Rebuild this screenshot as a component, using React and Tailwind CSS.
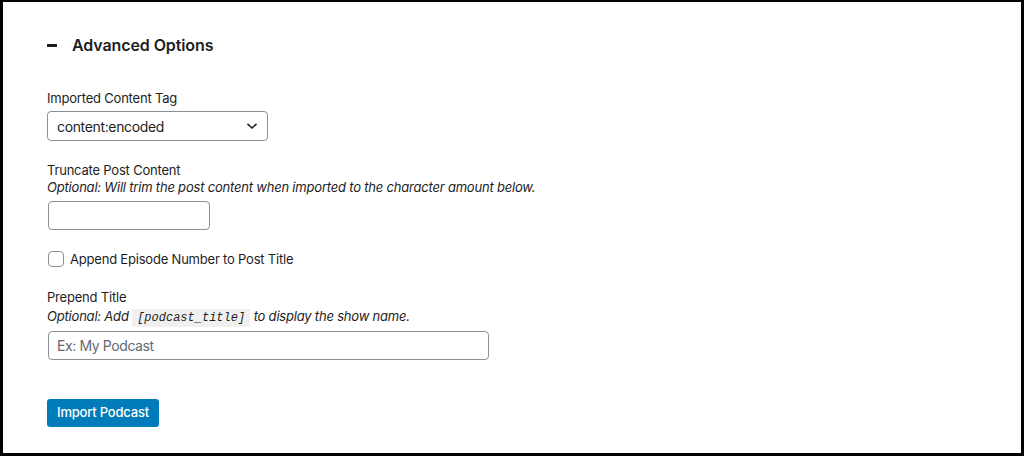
import React from "react";

export default function App() {
  const font = { fontFamily: "Inter, 'Noto Sans', sans-serif" };
  return (
    <div className="w-[1024px] h-[456px] bg-white border-black border-t-2 border-l-[3px] border-r-[3px] border-b-[3px] overflow-hidden text-[#1e1e1e] tracking-[-0.2px]" style={font}>
      <div className="pl-[44px] pt-[31px]">
        <div className="flex items-center h-6">
          <span className="w-[10px] h-[3px] bg-[#1e1e1e] mr-[15px]" />
          <h2 className="text-[16px] font-semibold leading-6 tracking-[-0.1px]">Advanced Options</h2>
        </div>

        <div className="mt-[32px] text-[13px] leading-[18px]">Imported Content Tag</div>
        <div className="mt-[4px] w-[221px] h-[30px] border border-[#8c8f94] rounded-[4px] flex items-center justify-between pl-[9px] pr-[9px]">
          <span className="text-[14px] tracking-[-0.35px]">content:encoded</span>
          <svg width="12" height="8" viewBox="0 0 12 8" fill="none">
            <path d="M1.5 1.8 L6 6 L10.5 1.8" stroke="#1e1e1e" strokeWidth="1.6" />
          </svg>
        </div>

        <div className="mt-[20px] text-[13px] leading-[18px]">Truncate Post Content</div>
        <div className="text-[13px] leading-[17px] italic">Optional: Will trim the post content when imported to the character amount below.</div>
        <div className="mt-[5px] w-[162px] h-[29px] border border-[#8c8f94] rounded-[4px] ml-[1px]" />

        <div className="mt-[21px] flex items-center h-4">
          <span className="w-4 h-4 border border-[#8c8f94] rounded-[4px] ml-[1px]" />
          <span className="ml-[6px] text-[13px] leading-[18px]">Append Episode Number to Post Title</span>
        </div>

        <div className="mt-[21px] text-[13px] leading-[18px]">Prepend Title</div>
        <div className="text-[13px] leading-[20px] italic">
          Optional: Add{" "}
          <code className="bg-[#f0f0f1] px-[5px] py-[2px] text-[12px] italic tracking-normal" style={{ fontFamily: "'Liberation Mono', monospace" }}>[podcast_title]</code>{" "}
          to display the show name.
        </div>
        <div className="mt-[3px] ml-[1px] w-[441px] h-[29px] border border-[#8c8f94] rounded-[4px] flex items-center pl-[8px]">
          <span className="text-[14px] tracking-[-0.4px] text-[#646970]">Ex: My Podcast</span>
        </div>

        <button className="mt-[39px] h-[28px] w-[112px] rounded-[3px] bg-[#007cba] text-white text-[13px] font-medium">Import Podcast</button>
      </div>
    </div>
  );
}
